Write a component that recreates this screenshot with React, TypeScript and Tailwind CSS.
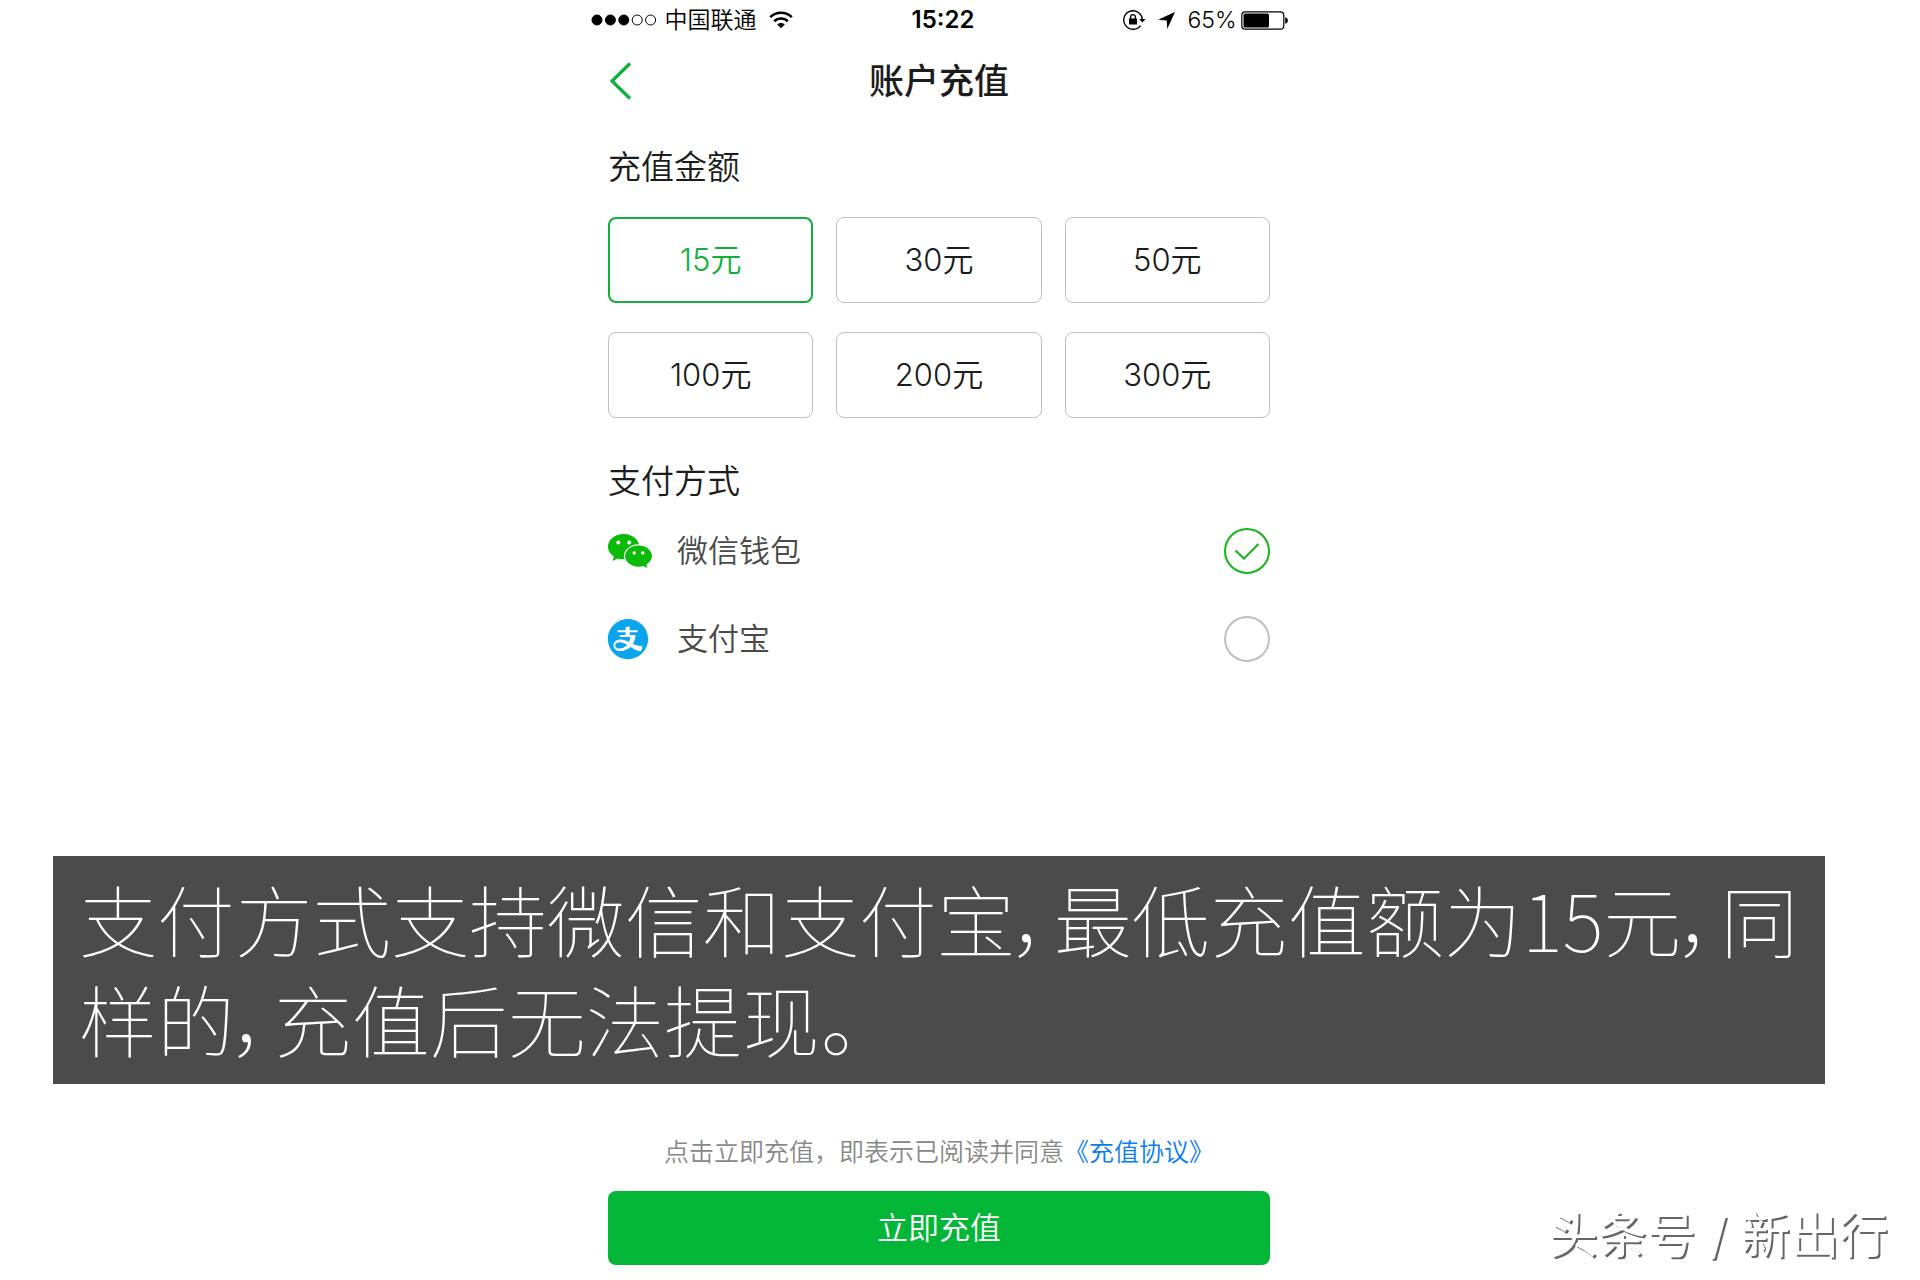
import { useState } from "react"
import { AiFillAlipayCircle } from "react-icons/ai"

const amounts = [15, 30, 50, 100, 200, 300]

const methods = [
  { id: "wechat", name: "微信钱包", icon: <WechatIcon /> },
  { id: "alipay", name: "支付宝", icon: <AiFillAlipayCircle size={46} className="-ml-[3px] text-[#0ba5ee]" /> },
]

function WechatIcon() {
  return (
    <svg width="44" height="34" viewBox="0 0 44 34" fill="#09bb07">
      <path d="M15.6 0C7 0 0 5.6 0 12.7c0 4 2.2 7.4 5.8 9.7L4.6 27l5-2.6c1.9.6 3.9.9 6 .9 8.600 0 15.600-5.600 15.600-12.600S24.200 0 15.600 0z" />
      <ellipse cx="30.500" cy="22" rx="14.500" ry="11.800" fill="#fff" />
      <path d="M30.500 11.500c-7.400 0-13.400 4.700-13.400 10.600s6 10.600 13.400 10.600c1.800 0 3.400-.2 4.900-.7l4 2-1-3.400c3.400-2 5.500-5 5.500-8.500 0-5.900-6-10.600-13.400-10.600z" />
      <g fill="#fff">
        <circle cx="10.300" cy="8.500" r="2" />
        <circle cx="21.200" cy="8.500" r="2" />
        <circle cx="26.200" cy="19" r="1.700" />
        <circle cx="34.800" cy="19" r="1.700" />
      </g>
    </svg>
  )
}

function StatusBar() {
  return (
    <div className="grid h-10 w-[697px] grid-cols-[1fr_auto_1fr] items-center text-[23px] leading-none text-black">
      <div className="flex items-center">
        <svg width="67" height="12" viewBox="0 0 67 12">
          {[0, 1, 2, 3, 4].map((i) => (
            <circle key={i} cx={6 + i * 13.4} cy="6" r="5" fill={i < 3 ? "#000" : "none"} stroke="#000" />
          ))}
        </svg>
        <span className="ml-[7px] font-[350]">中国联通</span>
        <svg className="ml-3" width="24" height="18" viewBox="0 0 24 18" fill="none" stroke="#000" strokeWidth="2.600">
          <path d="M1.200 6.200C7.200.2 16.800.2 22.800 6.200" />
          <path d="M5.200 10.300c3.800-3.700 9.800-3.700 13.600 0" />
          <path d="M12 17.300l-3.800-3.800c2.200-2 5.400-2 7.600 0z" fill="#000" stroke="none" />
        </svg>
      </div>
      <span className="pl-2 text-2xl leading-none font-semibold">15:22</span>
      <div className="flex items-center justify-end">
        <svg width="23" height="20" viewBox="0 0 23 20" fill="none" stroke="#000" strokeWidth="1.400">
          <path d="M17.500 15.600A9.300 9.300 0 1 1 19.300 9" />
          <path d="M16.200 9h6.400l-3.200 3.400z" fill="#000" stroke="none" />
          <rect x="6" y="8.500" width="8" height="6" fill="#000" stroke="none" />
          <path d="M7.600 9V7a2.400 2.400 0 0 1 4.800 0v2" />
        </svg>
        <svg className="ml-3" width="17" height="17" viewBox="0 0 17 17">
          <path d="M17 0L9.300 17 8.700 8.500 0 7.800z" />
        </svg>
        <span className="ml-3 font-[350]">65%</span>
        <svg className="ml-1" width="47" height="19" viewBox="0 0 47 19">
          <rect x=".8" y=".8" width="42" height="17.400" rx="3.500" fill="none" stroke="#000" strokeWidth="1.200" />
          <rect x="2.500" y="2.500" width="25.500" height="14" rx="1.500" />
          <path d="M44.200 6.200c3.600.6 3.600 6 0 6.600z" />
        </svg>
      </div>
    </div>
  )
}

export default function App() {
  const [amount, setAmount] = useState(15)
  const [method, setMethod] = useState("wechat")

  return (
    <div
      lang="zh-CN"
      className="relative min-h-screen bg-white pr-[42px] font-['Inter','Noto_Sans_CJK_SC',sans-serif] text-[#1c1c1c]"
    >
      <div className="flex flex-col items-center">
        <StatusBar />

        <main className="w-[662px]">
          {/* Header */}
          <header className="grid h-[82px] grid-cols-[1fr_auto_1fr] items-center">
            <button type="button" aria-label="返回" className="justify-self-start">
              <svg width="24" height="38" viewBox="0 0 24 38" fill="none" stroke="#0bb03a" strokeWidth="3.200">
                <path d="M22 1.500L4 19l18 17.500" />
              </svg>
            </button>
            <h1 className="text-[35px] font-medium">账户充值</h1>
          </header>

          {/* Amounts */}
          <h2 className="mt-5 text-[33px] leading-[50px] font-[350]">充值金额</h2>
          <div className="mt-[25px] grid grid-cols-3 gap-x-[23px] gap-y-[29px]">
            {amounts.map((value) => (
              <button
                key={value}
                type="button"
                aria-pressed={amount === value}
                onClick={() => setAmount(value)}
                className={`h-[86px] rounded-lg text-[31px] font-[350] ${
                  amount === value ? "border-2 border-[#12ae3c] text-[#12ae3c]" : "border border-[#c0c0c0]"
                }`}
              >
                {value}元
              </button>
            ))}
          </div>

          {/* Payment methods */}
          <h2 className="mt-[38px] text-[33px] leading-[50px] font-[350]">支付方式</h2>
          <div className="mt-px">
            {methods.map((item) => (
              <label key={item.id} className="flex h-[88px] items-center text-[31px] font-[350] text-[#4a4a4a]">
                <span className="w-[69px]">{item.icon}</span>
                <span className="flex-1">{item.name}</span>
                <span className="relative size-[46px]">
                  <input
                    type="radio"
                    name="method"
                    checked={method === item.id}
                    onChange={() => setMethod(item.id)}
                    className="block size-[46px] appearance-none rounded-full border-2 border-[#bfbfbf] checked:border-[#14b41c]"
                  />
                  {method === item.id && (
                    <svg className="absolute inset-0" width="46" height="46" viewBox="0 0 46 46" fill="none" stroke="#14b41c" strokeWidth="2">
                      <path d="M11.500 22.500l8.500 8 14.500-14.500" />
                    </svg>
                  )}
                </span>
              </label>
            ))}
          </div>
        </main>
      </div>

      {/* Caption */}
      <p className="mx-[53px] mt-[173px] bg-[#4b4b4b] pt-3 pr-4 pb-4 pl-[26px] font-['Noto_Sans_CJK_SC',sans-serif] text-[78px] leading-[100px] font-thin text-white [font-feature-settings:'palt']">
        支付方式支持微信和支付宝，最低充值额为15元，同样的，充值后无法提现。
      </p>

      <footer className="mx-auto mt-[50px] w-[662px] pb-[14px]">
        <p className="text-center text-[25px] leading-9 font-[350] text-[#888]">
          点击立即充值，即表示已阅读并同意
          <a href="#agreement" className="text-[#0a7cf0]">
            《充值协议》
          </a>
        </p>
        <button type="button" className="mt-[21px] h-[74px] w-full rounded-lg bg-[#03b637] text-[31px] font-[350] text-white">
          立即充值
        </button>
      </footer>

      {/* Watermark */}
      <div className="absolute right-8 bottom-2 text-[49px] text-white [text-shadow:2px_2px_0_#666]">头条号 / 新出行</div>
    </div>
  )
}
